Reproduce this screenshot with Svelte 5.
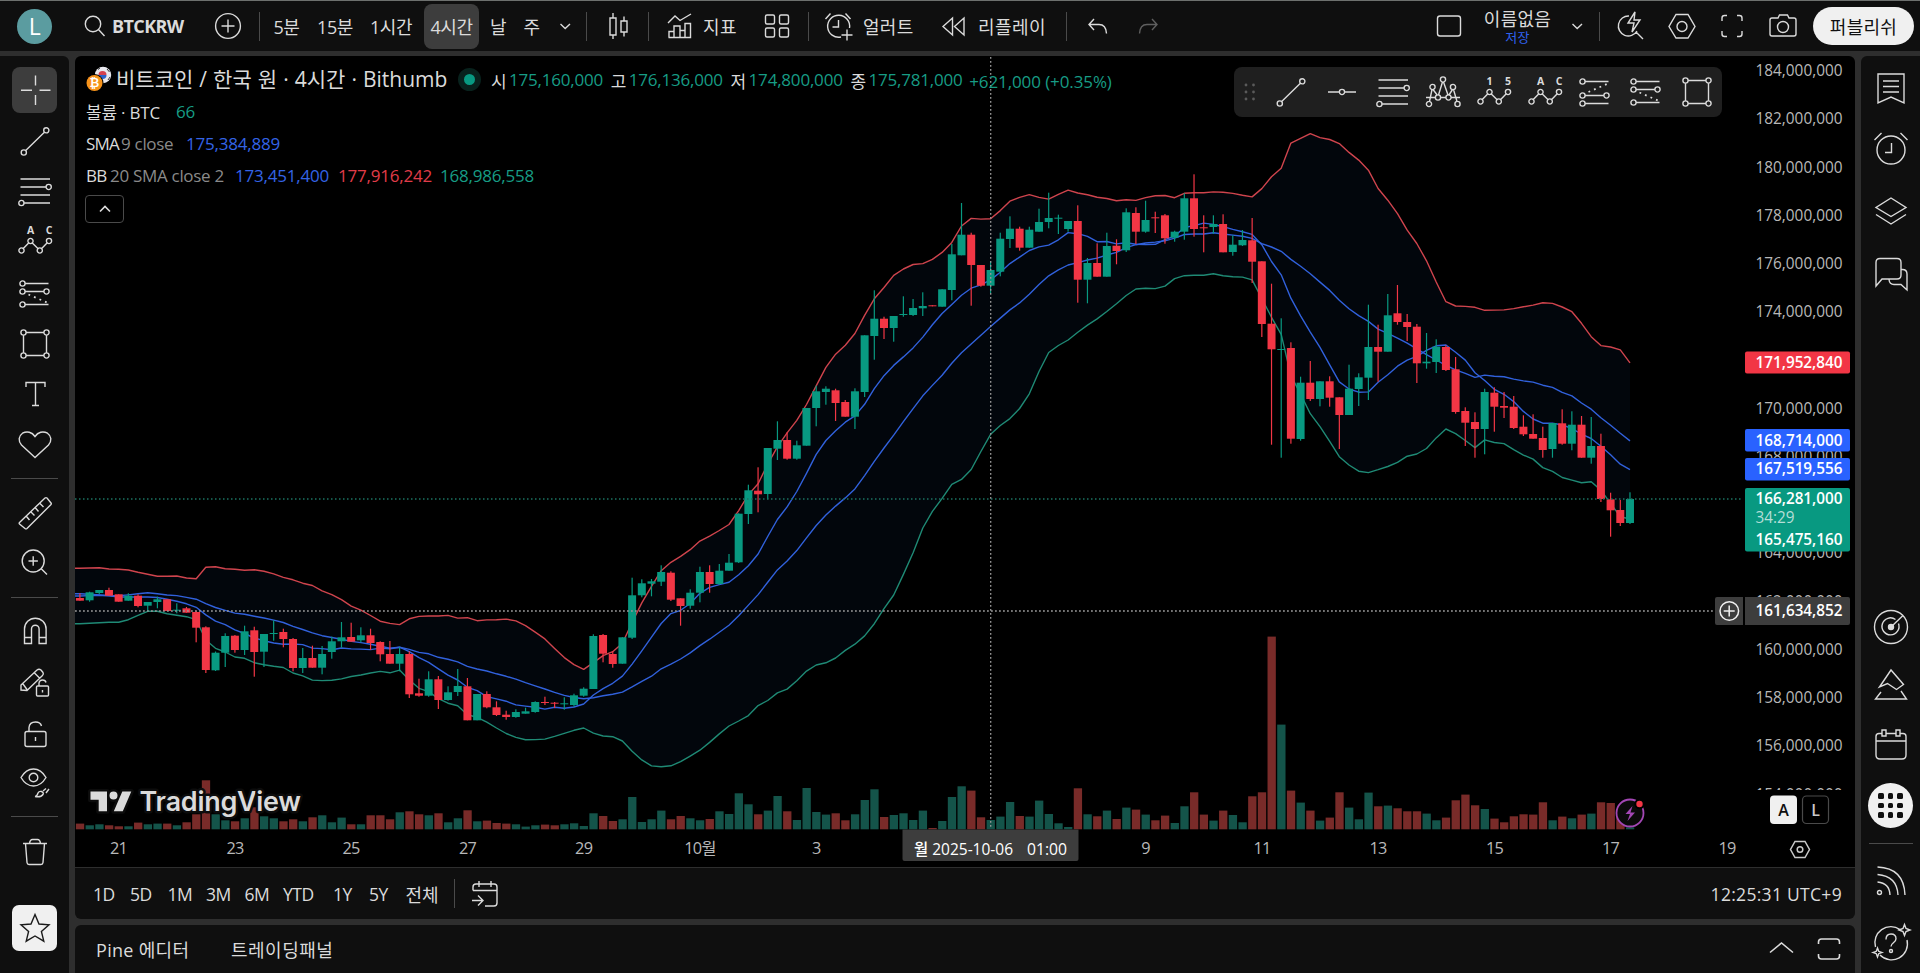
<script>
  const ring = (x, y, r = 2.6) => `M${x - r} ${y}a${r} ${r} 0 1 0 ${2 * r} 0a${r} ${r} 0 1 0 ${-2 * r} 0`;

  // every icon is drawn on a 36 x 36 grid
  const wave = ring(4.5, 27.5) + ring(13.5, 18) + ring(22.8, 27.5) + ring(32, 18) + 'M6.3 25.6L11.6 20M15.3 20l5.6 5.6M24.7 25.6L30 20';
  const icons = {
    search: ring(16, 16, 7.7) + 'M21.7 21.7L27.5 28',
    plus: ring(18, 18, 12.4) + 'M18 11.5v13M11.5 18h13',
    down: 'M13.5 16l4.7 4.5L23 16',
    candles: 'M10 10h6v17h-6zM13 5v5M13 27v4M21 13h6v11h-6zM24 8.5V13M24 24v4.5',
    indicators: 'M6 15l7-7 5 4.500L29 6M7 29.500v-6h5v6M12 29.500V18h6v11.500M18 29.500v-7h5M23 29.500V15.500h5.500v14H6.500',
    grid: 'M8 7h6q1.500 0 1.500 1.500v6q0 1.500-1.500 1.500h-6q-1.500 0-1.500-1.500v-6q0-1.500 1.500-1.500zM22 7h6q1.500 0 1.500 1.500v6q0 1.500-1.500 1.500h-6q-1.500 0-1.500-1.500v-6q0-1.500 1.500-1.500zM8 20h6q1.500 0 1.500 1.500v6q0 1.500-1.500 1.500h-6q-1.500 0-1.500-1.500v-6q0-1.500 1.500-1.500zM22 20h6q1.500 0 1.500 1.500v6q0 1.500-1.500 1.500h-6q-1.500 0-1.500-1.500v-6q0-1.500 1.500-1.500z',
    alert: 'M20 29A11 11 0 1 1 28.500 20M17.500 12v7h-6M4.500 11l5-5.500M24.500 5.500l5 5.500M26 21.500v11M20.500 27h11',
    rewind: 'M16.500 10v17L7 18.500zM28 10v17l-9.500-8.500z',
    undo: 'M14 11l-5 5.500 5 5.500M9 16.500h10q7 0 7.500 9',
    redo: 'M22 11l5 5.500-5 5.500M27 16.500H17q-7 0-7.500 9',
    square: 'M9 8h18q2.500 0 2.500 2.500v15q0 2.500-2.500 2.500H9q-2.500 0-2.500-2.500v-15Q6.500 8 9 8z',
    quick: 'M16 8a10 10 0 1 0 8 15M23 24l7 7M22 4l-7 11h6l-2 9 8-12h-6z',
    settings: 'M12 6.500h12L31 18.500 24 30H12L5 18.500z' + ring(18, 18.500, 5),
    fullscreen: 'M8 13V10q0-2.500 2.500-2.500H13M23 7.500h2.500Q28 7.500 28 10v3M28 23v3q0 2.500-2.500 2.500H23M13 28.500h-2.500Q8 28.500 8 26v-3',
    camera: 'M7 10h6l1.500-3h8L24 10h5q2 0 2 2v14q0 2-2 2H7q-2 0-2-2V12q0-2 2-2z' + ring(18, 19, 5.500),
    cross: 'M18.500 3.500v10M18.500 23v10M4 18.200h11M22.500 18.200h11',
    trend: ring(6.800, 29.500) + ring(29.300, 7.300) + 'M8.700 27.500L27.400 9.200',
    hline: ring(18, 18) + 'M4 18h11.400M20.600 18H32',
    fib: 'M3.500 6h29.500M3.500 14h25.600M3.500 22h29.500M7 30h26' + ring(31.700, 14) + ring(4.400, 30),
    shoulders: ring(4, 30) + ring(7.500, 13) + ring(13, 23.500) + ring(18, 5.500) + ring(23.500, 23.500) + ring(28, 13) + ring(32.500, 30) + 'M4.500 27.500L7 15.500M8 15.500l4.200 5.500M13.500 21l4-13M18.500 8l4.500 13M24 21l3.500-5.500M28.500 15.500l3.500 12M1 23.500h9.400M15.600 23.500h5.300M26 23.500h9',
    wave,
    forecast: ring(5.500, 7.500) + ring(5.500, 15.500) + ring(5.500, 28.500) + ring(29.500, 15.500) + 'M8 7.500h23.500M8 15.500h19M8 28.500h23.500',
    forecastUp: ring(5.500, 7.500) + ring(5.500, 21.500) + ring(5.500, 29.500) + ring(29.500, 21.500) + 'M8 7.500h23.500M8 21.500h19M8 29.500h23.500',
    rect: ring(6.500, 6.500) + ring(29.500, 6.500) + ring(6.500, 29.500) + ring(29.500, 29.500) + 'M9 6.500h18M9 29.500h18M6.500 9v18M29.500 9v18',
    text: 'M9 11V6.500h19V11M18.500 6.500v23M15 29.500h7',
    heart: 'M18 31.500L4.500 19C1 15 1.500 10 5.500 7.200 10 4.800 15 6 18 10.500 21 6 26 4.800 30.500 7.200 34.500 10 35 15 31.500 19z',
    ruler: 'M2.500 27.500L28 3q1-.8 2 0l4 5q.6.8 0 1.500L10 33.500q-1 .8-2 0l-5.500-4.500q-.7-.7 0-1.500zM9.500 21.500l3 3.500M14 17l3.500 3.500M18.500 13l3 3.500M23 8.500l3.500 3.500',
    zoom: ring(16.200, 17, 11) + 'M11.500 17h9.400M16.200 12.300v9.400M24.500 25l5.500 5.500',
    magnet: 'M7.500 29.500V15a10.800 10.800 0 0 1 21.600 0v14.500h-7V15a3.800 3.800 0 0 0-7.600 0v14.500zM7.500 23.500h7M22 23.500h7',
    pencil: 'M4 25v-5L20 5q2-1.500 4 0l2 2.500q1 1.700-.5 3L10 25.500zM6 19l4 5.500M17.500 8l5 5M20.500 21h10q1 0 1 1v8q0 1-1 1h-10q-1 0-1-1v-8q0-1 1-1zM22 21v-3q.5-3 3.500-3t3.500 2.500M25.500 25v2.500',
    lock: 'M10 15.500h17q2 0 2 2v11q0 2-2 2H10q-2 0-2-2v-11q0-2 2-2zM12 15.500v-4q.5-5.500 6.500-5.500 5 0 6 4M18.500 21v4',
    eye: 'M4 12.500Q9 4 16.500 4T29 12.500Q24 21 16.500 21T4 12.500z' + ring(16.500, 12.500, 4.300) + 'M18 31.500q2 0 3-3.500 1-2 3.500-1.500 2.500 1 1.500 3-2 3-8 2zM26 26l3-2.500M29 28l3-4',
    trash: 'M6 9.500h24M8.500 9.500l1.500 19q.2 2 2 2h12q1.800 0 2-2l1.500-19M12.500 9.500q.5-4 3-4h5q2.500 0 3 4',
    star: 'M18 4.500l4 9.500 10 .8-7.600 6.600 2.400 9.800L18 26l-8.800 5.200 2.400-9.800L4 14.800l10-.8z',
    watchlist: 'M5 3h26v29l-13-6-13 6zM10 10h16M10 15.500h16M10 21h16',
    alarm: ring(18, 19, 14) + 'M18.500 12v9.500H12M1.500 9l7-7M27.500 2l7 7',
    layers: 'M18 5l15 9.500-15 9L3 14.500zM3 21.500l15 9.500 15-9.500',
    chats: 'M7 2.500h17q4 0 4 4V19q0 4-4 4H9l-6 7V6.500q0-4 4-4zM28 13.500h1.500q4.500 0 4.500 4.500v16l-6-5.500h-7q-4.500 0-5-5',
    radar: ring(18, 18, 16.500) + 'M25.500 14.500a8.500 8.500 0 1 1-3-4M18 18L30 6.500',
    ideas: 'M6.500 20L18 3l12.500 14.500-7 5-9-6zM8 25L2.500 32h31L28 24',
    calendar: 'M6 6.500h3M13 6.500h10M27 6.500h3q3 0 3 3V28q0 4-4 4H7q-4 0-4-4V9.500q0-3 3-3M3 14h30M9 3h4v6H9zM23 3h4v6h-4z',
    streams: ring(6.500, 29.500, 2) + 'M4.500 19q12 1 12.500 13M4.500 11.500Q24 13 25 32M4.500 4Q31 5 32 32',
    help: 'M27 4.500A16 16 0 0 0 2.500 22M7 30a16 16 0 0 0 27-15M13 14.500q0-5.500 5-5.500t5 4.800c0 4-5 4-5 7.700' + ring(18, 26, 1.500) + 'M31.500-.5l1.500 4 4 1.500-4 1.500-1.500 4-1.500-4-4-1.500 4-1.500zM4.500 23l1.200 3.300 3.300 1.200-3.300 1.200-1.200 3.300-1.200-3.300L0 27.500l3.300-1.200z',
    goto: 'M6 14.500V11q0-3 3-3h18q3 0 3 3v16q0 3-3 3h-9M6 14.500h24M12 5v6M24 5v6M5 24.500h10M11 19.500l5 5-5 5'
  };

  const leftTools = ['cross', 'trend', 'fib', 'wave', 'forecast', 'rect', 'text', 'heart', '-', 'ruler', 'zoom', '-', 'magnet', 'pencil', 'lock', 'eye', '-', 'trash'];
  const favorites = ['trend', 'hline', 'fib', 'shoulders', 'wave15', 'wave', 'forecastUp', 'forecast', 'rect'];
  const ranges = ['1D', '5D', '1M', '3M', '6M', 'YTD', '1Y', '5Y', '전체'];

  // direction, high, body top, body bottom, low, volume (pane pixels)
  const bars = `
r 593.3 598 600.7 600.7 5.7|g 591.7 592.3 600.3 601.7 4|g 590 590 593 594 5|r 587.7 590 595.7 595.7 4|r 594.3 594.3 601.7 601.7 3
g 593.3 595.7 600.7 600.7 3|r 594.3 595.7 606 607.3 6.7|g 602 602 605.7 611 5|g 596.7 599.3 602 608.3 5.7|r 599.3 599.3 611 611 5.7
g 603.3 609.7 610.7 613.3 4|r 607 608.3 612.7 612.7 7|r 610.7 612 627.7 642.3 15|r 626.3 627.3 670 673 49|g 651.5 652.7 670.3 671 15
g 633.3 636 652.7 667 9|r 635 635.7 650 652.7 8|g 625.7 631.3 650 655 11|r 626.7 630.3 652 676.7 22|g 634 634 651.7 667 13
g 620.3 633 634 640.7 11|r 628.7 632 639 647.3 8|r 638 639 668 671.3 10|g 648 658 668 673 8|r 645.7 658 667.7 667.7 12
g 646 654 667.7 674.3 14|g 636.7 641.3 652 658.7 7|g 622 637.3 641.3 647.7 11.7|r 622.7 637 641.7 641.7 5|g 627.3 635.3 640.3 642.3 5
r 628.7 635.3 643 650 14|r 641.3 642 654.3 661.3 14|r 641 654 663.7 663.7 10|g 647.3 654 663.7 671.3 17|r 651.3 654 694.3 698 18
r 678.7 693.3 695.7 696.7 15|g 671.3 679.3 695.7 696.7 14|r 676 679.3 700 709 16|g 686.3 692.3 700 700.7 7|g 669 686 692 696 11
r 678 686.3 720.3 720.3 19|g 694 694 720.3 720.3 8|r 691.3 694 707.3 708.3 8.7|r 701.3 707.3 715 716 6.3|r 710.7 714.7 717 719.7 5.7
g 709.3 712 717 717.7 5|g 707.7 711.3 713.7 713.7 2.7|g 701.3 702 712 712.7 4|r 696.7 702 703 705 4.7|r 702 702.7 703.7 708 4
g 697.3 703.3 704.3 709.7 5|g 693.7 695.3 705 706.7 6|g 687.3 688.7 695.7 696.7 3.3|g 634.3 636 689 689 16|r 634 635 653.7 662.3 13.3
r 651.3 654 664 667.7 8.3|g 637.3 637.3 663.7 663.7 10|g 577.7 595.3 637.7 639 32.3|g 579.3 583.3 595.3 597.3 7.3|g 579 581.3 583.7 596.3 10
g 565.3 572 581.7 586 18.7|r 571.3 572.7 599.7 601 10|r 598.3 598.3 606 625.7 13.3|g 589.3 592.7 605.7 608.7 11|g 566.7 572 592.7 602.3 9
r 565.3 572 584 592.7 10.3|g 564 570.7 584 584.7 18|g 554 562.7 570.7 570.7 15.3|g 513.3 513.7 562.3 563 36|g 484.7 490.3 514 524 25
r 467.3 490.7 494.3 512.3 15|g 448 448 494 499.3 18.7|g 421.3 440 448.7 460 33.3|r 432.3 440 458.7 459.7 18|g 440.7 445.3 458.7 459.7 9.3
g 408 408 445.7 445.7 41.3|g 385.7 391.3 408 426.3 17.3|g 386.3 388.7 392 404.7 14.7|r 388.7 390.3 403 421 16|r 400 402 416.7 416.7 9
g 388.3 391.3 416.7 429 15|g 335.3 335.3 392 397 29.3|g 290.3 318.7 336 359.7 40|r 316.7 318.7 328 339 12.3|g 316 316 328 341.7 14.3
g 296.3 314 315 316.7 16|g 299 308 315 316 9.3|g 292.3 306 308.3 316 18.7|r 305.3 305.3 306.3 306.3 1.3|g 289.3 289.3 306.7 306.7 8.3
g 244 254.3 290 300.3 32.3|g 203 234.7 255.3 255.3 43|r 232.7 234.7 265 305.7 38.7|r 265 265 285.7 286.7 12|g 261.3 270 285.7 293.3 9.3
g 232.7 238.7 271.7 276.3 12.7|g 216.3 228.7 239 248 27.3|r 226.7 228.7 247.7 250.7 13.3|g 226.7 229.7 247.7 247.7 12.7|g 208.7 222 231.7 231.7 28.7
g 192.7 218 222 228.3 15.3|g 214.7 217.7 218.7 234 6|g 221 221 229 231.7 2.3|r 205.3 221 279.7 302.7 41|g 258 263 279.7 303.3 15
r 243.3 263 276.7 276.7 13|g 232.7 246 276.7 276.7 18.7|r 239.3 245.7 251 264.3 10.3|g 208.3 212.3 250.3 252 21.7|r 207.3 213 231.7 244 19.7
g 200.7 220 231.7 232.7 14.7|r 211.7 217.3 218.3 233 9|r 214 215.3 238.3 243.7 13.7|g 230.7 231.7 237.7 241.7 6.3|g 193.3 198.3 231.7 239.7 23
r 174.3 198.3 229 236.7 37|r 215.3 227.3 228.3 252.3 14.7|g 215.3 224 227 233.7 8.7|r 214.3 224 252.3 252.3 18.7|g 235.3 244.7 252 255.7 14.3
g 230 240 245.3 246 7|r 218 240.3 261.7 283 33|r 261.3 261.3 324 337 37|r 283.7 323.7 349.3 444.7 192.7|g 318.3 349 350 457.7 104.7
r 342.3 348 438.7 443.7 38.7|g 376.7 382.7 439 440.7 26.7|r 361 382.7 399 401 18.7|g 381.3 381.3 399 406.3 8.7|r 376.3 381.3 397.7 406.7 11.7
r 397.3 397.3 415 449 37|g 364.7 388.7 415 415 21.7|g 373.3 377.3 389 406 10|g 304.7 347 377.7 400 36.7|r 324.7 347 351.7 381.7 23
g 294 315.3 351.7 351.7 23.7|r 285 313.3 322 324.7 21|r 314 322 327 341 18|r 324 326.7 363.3 383 18|g 333 361.7 363.3 368.7 15.7
g 339.3 346.7 362 373 9|r 345.3 347 370 371 11.7|r 357 369.3 412 413.7 29|r 407.3 411 422.7 446 34.7|r 412.3 422 429 457.7 24
g 388.7 392 429 454.3 20.3|r 387.3 392.7 406.7 431.7 10.7|r 392 406 407.7 418 7|r 396 406.7 428 429 13|r 415.3 426.7 434.3 436 15
r 414.3 434 438.7 438.7 14.7|r 426.7 438 450 457.7 27|g 423 423 449 457.7 9|r 409.3 423.3 443.7 444.7 12.7|g 411.3 424.7 443.7 450.3 11
r 416 424.7 457.7 457.7 14.7|g 417 446 457.7 463.7 15.7|r 433.7 446 499 502 27|r 492.7 499.3 510.3 536.7 26.3|r 500 510 523 526 14|g 492.3 499 523 524 2`
    .trim()
    .split(/[|\n]/)
    .map((row, i) => {
      const [dir, ...n] = row.split(' ');
      const [high, top, bottom, low, vol] = n.map(Number);
      return { dir, high, top, bottom, low, vol, x: 79.9 + 9.688 * i, close: dir === 'g' ? top : bottom };
    });

  // indicator values for the bars that have no full look-back in view
  const upperLead = [568.3, 568, 567.7, 569, 569.3, 570, 572.3, 574.3, 576.3, 576.3, 576, 578, 578.7, 567.3, 566.7, 568.7, 569.3, 570.3, 569.7, 571.3];
  const lowerLead = [623.7, 623.3, 622.7, 622.3, 622.3, 619.7, 615.3, 611.3, 611.3, 613.7, 615.3, 616.7, 619.7, 640, 648.3, 652, 657, 658.3, 662.7, 664.7];
  const smaLead = [593.7, 594.3, 595, 595.7, 597, 597, 597, 597, 597.5];

  const mean = (list) => list.reduce((a, b) => a + b, 0) / list.length;
  const closes = bars.map((b) => b.close);

  const sma = closes.map((_, i) => (i < 9 ? smaLead[i] : mean(closes.slice(i - 8, i + 1))));
  const bands = closes.map((_, i) => {
    if (i < 20) return [upperLead[i], (upperLead[i] + lowerLead[i]) / 2, lowerLead[i]];
    const win = closes.slice(i - 19, i + 1);
    const m = mean(win);
    const sd = Math.sqrt(mean(win.map((v) => (v - m) ** 2)));
    return [m - 2 * sd, m, m + 2 * sd];
  });

  const line = (ys) => [`70,${ys[0]}`, ...ys.map((y, i) => `${bars[i].x.toFixed(1)},${y.toFixed(1)}`)];
  const upper = line(bands.map((b) => b[0]));
  const middle = line(bands.map((b) => b[1]));
  const lower = line(bands.map((b) => b[2]));
  const smaLine = line(sma);
  const cloud = [...upper, ...[...lower].reverse()].join(' ');

  const prices = [184, 182, 180, 178, 176, 174, 170, 168, 164, 162, 160, 158, 156, 154];
  const priceY = (p) => 71 + (184 - p) * 24.11;
  const dates = [['21', 118.5], ['23', 235], ['25', 351], ['27', 467.5], ['29', 583.7], ['10월', 700], ['3', 816.3], ['9', 1145.6], ['11', 1262], ['13', 1378], ['15', 1494.5], ['17', 1610.6], ['19', 1727]];
  const ohlc = [['시', '175,160,000'], ['고', '176,136,000'], ['저', '174,800,000'], ['종', '175,781,000']];
</script>

{#snippet icon(name)}
  <svg class="icon" width="36" height="36" viewBox="0 0 36 36">
    <path d={name === 'wave15' ? icons.wave : icons[name]} />
    {#if name === 'wave' || name === 'wave15'}
      <text x="13.5" y="10.5">{name === 'wave' ? 'A' : '1'}</text>
      <text x="32" y="10.5">{name === 'wave' ? 'C' : '5'}</text>
    {:else if name === 'forecast'}
      <path class="dots" d="M11.500 18.500L31 27" />
    {:else if name === 'forecastUp'}
      <path class="dots" d="M11.500 18L31 9.500" />
    {:else if name === 'radar'}
      <circle class="solid" cx="18" cy="18" r="2.5" />
    {/if}
  </svg>
{/snippet}

{#snippet tag(y, label)}
  <text x="1755.5" {y} textLength="87" lengthAdjust="spacingAndGlyphs">{label}</text>
{/snippet}

<div class="app">
  <header>
    <div class="account"><span>L</span></div>
    <div class="symbol">{@render icon('search')}<b>BTCKRW</b></div>
    <div class="add">{@render icon('plus')}</div>
    <i class="sep s1"></i>
    <div class="m5">5분</div>
    <div class="m15">15분</div>
    <div class="h1">1시간</div>
    <div class="h4">4시간</div>
    <div class="day">날</div>
    <div class="week">주</div>
    <div class="more">{@render icon('down')}</div>
    <i class="sep s2"></i>
    <div class="style">{@render icon('candles')}</div>
    <i class="sep s3"></i>
    <div class="ind">{@render icon('indicators')}지표</div>
    <div class="tpl">{@render icon('grid')}</div>
    <i class="sep s4"></i>
    <div class="alert">{@render icon('alert')}얼러트</div>
    <div class="replay">{@render icon('rewind')}리플레이</div>
    <i class="sep s4"></i>
    <div class="undo">{@render icon('undo')}</div>
    <div class="redo">{@render icon('redo')}</div>
    <div class="layout">{@render icon('square')}</div>
    <div class="name"><span>이름없음</span><small>저장</small></div>
    <div class="arrow">{@render icon('down')}</div>
    <i class="sep s5"></i>
    <div class="quick">{@render icon('quick')}</div>
    <div class="settings">{@render icon('settings')}</div>
    <div class="full">{@render icon('fullscreen')}</div>
    <div class="snap">{@render icon('camera')}</div>
    <button class="publish">퍼블리쉬</button>
  </header>

  <div class="body">
    <aside class="left">
      {#each leftTools as tool}
        {#if tool === '-'}
          <hr />
        {:else}
          <div class="tool {tool}">{@render icon(tool)}</div>
        {/if}
      {/each}
      <div class="tool fav">{@render icon('star')}</div>
    </aside>

    <main>
      <section class="chart">
        <svg class="plot" width="1780" height="810" viewBox="75 57 1780 810">
          <defs>
            <clipPath id="axis"><rect x="1744" y="57" width="110" height="733" /></clipPath>
          </defs>
          {#each bars as b}
            <rect class="vol {b.dir}" x={b.x - 4} y={829.3 - b.vol} width="8.3" height={b.vol} />
          {/each}
          <polygon class="cloud" points={cloud} />
          <polyline class="line blue" points={middle.join(' ')} />
          <polyline class="line blue" points={smaLine.join(' ')} />
          <polyline class="line red" points={upper.join(' ')} />
          <polyline class="line green" points={lower.join(' ')} />
          {#each bars as b}
            <rect class="wick {b.dir}" x={b.x - 0.6} y={b.high} width="1.2" height={b.low - b.high} />
            <rect class="bar {b.dir}" x={b.x - 4} y={b.top} width="8" height={b.bottom - b.top} />
          {/each}

          <path class="last" d="M75 499H1742" />
          <path class="hair" d="M75 611H1714M990.700 57V829" />

          <g class="logo">
            <path d="M90.500 791.500h16.500v19.800h-8.300v-11.500h-8.200zM122.300 791.500h9l-8.500 19.800h-9zM117.500 795.500a4 4 0 1 1-8 0a4 4 0 1 1 8 0z" />
            <text x="139.500" y="811.300" textLength="161.500">TradingView</text>
          </g>

          <g class="flash">
            <circle cx="1630" cy="813" r="13.500" />
            <path d="M1632.500 806l-7 8h4.500l-2.500 7 7.500-8.500h-4.500z" />
            <circle class="badge" cx="1639.500" cy="804" r="4.200" />
          </g>

          <g class="prices" clip-path="url(#axis)">
            {#each prices as p}
              {@render tag(priceY(p) + 5.2, `${p},000,000`)}
            {/each}
          </g>
          <g class="tags">
            <rect class="tred" x="1745" y="351.500" width="105" height="22" rx="2" />
            <rect class="tblue" x="1745" y="429" width="105" height="22.500" rx="2" />
            <rect class="tblue" x="1745" y="458" width="105" height="22.500" rx="2" />
            <rect class="tgreen" x="1745" y="488" width="105" height="63.500" rx="2" />
            <path class="tgrey" d="M1717 597h26v28h-26q-2 0-2-2v-24q0-2 2-2zM1745 597h103q2 0 2 2v24q0 2-2 2h-103z" />
            <path class="addline" d="M1729.200 605.500v11M1723.700 611h11M1720 611a9.300 9.300 0 1 0 18.600 0a9.300 9.300 0 1 0-18.600 0" />
            {@render tag(367.5, '171,952,840')}
            {@render tag(445.5, '168,714,000')}
            {@render tag(474, '167,519,556')}
            {@render tag(504, '166,281,000')}
            <text class="timer" x="1755.500" y="522.800" textLength="39" lengthAdjust="spacingAndGlyphs">34:29</text>
            {@render tag(545.2, '165,475,160')}
            {@render tag(616, '161,634,852')}
          </g>
          <g class="modes">
            <rect class="on" x="1770" y="795.500" width="27" height="28.500" rx="4" />
            <rect x="1802.500" y="796" width="26" height="27.500" rx="4" />
            <text class="dark" x="1783.500" y="815.500">A</text>
            <text x="1815.500" y="815.500">L</text>
          </g>
          <g class="dates">
            {#each dates as [label, x]}
              <text {x} y="854.3">{label}</text>
            {/each}
            <path d="M1795 841.500h10l4.500 8-4.500 8h-10l-4.500-8zM1797.200 849.500a2.800 2.800 0 1 0 5.600 0a2.800 2.800 0 1 0-5.600 0" />
          </g>
          <g class="when">
            <path d="M902.500 829.500h176v29.500q0 2-2 2h-172q-2 0-2-2z" />
            <text x="914" y="854.500" textLength="99" lengthAdjust="spacingAndGlyphs">월 2025-10-06</text>
            <text x="1027" y="854.500" textLength="40" lengthAdjust="spacingAndGlyphs">01:00</text>
          </g>
        </svg>

        <div class="legend">
          <div class="title">
            <svg class="coins" width="27" height="27" viewBox="0 0 27 27">
              <circle cx="17" cy="9" r="8.200" fill="#e8e8ee" />
              <path d="M12.500 9a4 4 0 0 1 8 0z" fill="#d6414e" />
              <path d="M12.500 9a4 4 0 0 0 8 0z" fill="#2c62c9" />
              <path d="M21 3l2.500 3M22 14l2-3M12 3.500l2-1.500" stroke="#333" />
              <circle cx="8.500" cy="17" r="9" fill="#000" />
              <circle cx="8.500" cy="17" r="8" fill="#f7931a" />
              <text x="8.500" y="21.200">₿</text>
            </svg>
            <h1>비트코인 / 한국 원 · 4시간 · Bithumb</h1>
            <span class="live"></span>
            {#each ohlc as [k, v]}
              <span class="k">{k}</span><span class="v">{v}</span>
            {/each}
            <span class="chg">+621,000 (+0.35%)</span>
          </div>
          <div class="row"><span class="w90">볼륨 · BTC</span><span class="up">66</span></div>
          <div class="row"><b class="w35">SMA</b><span class="dim w65">9 close</span><span class="mid">175,384,889</span></div>
          <div class="row"><b class="w24">BB</b><span class="dim w125">20 SMA close 2</span><span class="mid w103">173,451,400</span><span class="down w102">177,916,242</span><span class="up">168,986,558</span></div>
          <div class="fold"><svg width="12" height="8" viewBox="0 0 12 8"><path d="M1 6.500l5-5 5 5" /></svg></div>
        </div>

        <div class="favbar">
          <svg class="grip" width="12" height="18" viewBox="0 0 12 18">
            <circle cx="2" cy="2" r="1.400" /><circle cx="9.500" cy="2" r="1.400" />
            <circle cx="2" cy="9" r="1.400" /><circle cx="9.500" cy="9" r="1.400" />
            <circle cx="2" cy="16" r="1.400" /><circle cx="9.500" cy="16" r="1.400" />
          </svg>
          {#each favorites as f}
            <div>{@render icon(f)}</div>
          {/each}
        </div>
      </section>

      <section class="ranges">
        {#each ranges as r}
          <span class="range">{r}</span>
        {/each}
        <i class="sep"></i>
        {@render icon('goto')}
        <time>12:25:31 UTC+9</time>
      </section>

      <footer>
        <span class="pine">Pine 에디터</span>
        <span>트레이딩패널</span>
        <svg width="74" height="24" viewBox="0 0 74 24">
          <path d="M2 15.500L13.500 6 25 15.500M50.500 7V5q0-3 3-3h15q3 0 3 3v2M50.500 17v2q0 3 3 3h15q3 0 3-3v-2" />
        </svg>
      </footer>
    </main>

    <aside class="right">
      <div class="watch">{@render icon('watchlist')}</div>
      <div class="alarm">{@render icon('alarm')}</div>
      <div class="layers">{@render icon('layers')}</div>
      <div class="chats">{@render icon('chats')}</div>
      <div class="radar">{@render icon('radar')}</div>
      <div class="ideas">{@render icon('ideas')}</div>
      <div class="cal">{@render icon('calendar')}</div>
      <div class="apps">
        <span>{#each Array(9) as _}<i></i>{/each}</span>
      </div>
      <hr />
      <div class="streams">{@render icon('streams')}</div>
      <div class="help">{@render icon('help')}</div>
    </aside>
  </div>
</div>

<style>
  :global(body) {
    margin: 0;
    background: #2e2e2e;
    overflow: hidden;
  }

  .app {
    width: 1920px;
    height: 973px;
    display: flex;
    flex-direction: column;
    gap: 5px;
    background: #2e2e2e;
    color: #dbdbdb;
    font-family: "Open Sans", "Noto Sans CJK KR", sans-serif;
    font-size: 18px;
  }

  svg {
    display: block;
    flex: none;
  }

  .icon {
    fill: none;
    stroke: currentColor;
    stroke-width: 1.4;
    overflow: visible;
  }

  .icon text {
    fill: currentColor;
    stroke: none;
    font-size: 10.5px;
    font-weight: 700;
    text-anchor: middle;
  }

  .icon .dots {
    stroke-width: 1.8;
    stroke-dasharray: 1.8 4.2;
  }

  .icon .solid {
    fill: currentColor;
  }

  header {
    height: 51px;
    box-sizing: border-box;
    border-top: 1px solid #6d706e;
    background: #0f0f0f;
    display: flex;
    align-items: center;
    flex: none;
  }

  header > div {
    height: 45px;
    box-sizing: border-box;
    display: flex;
    align-items: center;
    justify-content: center;
    flex: none;
    letter-spacing: -0.4px;
    white-space: nowrap;
  }

  .account { width: 69px; }

  .account span {
    width: 35px;
    height: 35px;
    border-radius: 50%;
    background: #5b9ca0;
    color: #fff;
    font-size: 23px;
    font-weight: 500;
    line-height: 35px;
    text-align: center;
  }

  header .symbol { width: 133px; justify-content: flex-start; padding-left: 8px; }
  .symbol b { font-weight: 700; font-size: 18px; letter-spacing: -0.6px; margin-left: -1px; }
  .add { width: 51px; }

  .sep {
    flex: none;
    height: 29px;
    width: 1px;
    background: #4a4a4a;
  }

  .s1 { margin: 0 6px; }
  .s2 { margin: 0 2px 0 3px; }
  .s3 { margin: 0 1px; }
  .s4 { margin: 0 5px 0 6px; }
  .s5 { margin: 0 7px; }
  .m5 { width: 41px; }
  .m15 { width: 56px; }
  .h1 { width: 56px; }
  .h4 { width: 55px; margin-left: 5px; background: #3d3d3d; border-radius: 8px; }
  .day { width: 38px; }
  .week { width: 29px; }
  .more { width: 37px; }
  .style { width: 58px; }
  header .ind { width: 102px; justify-content: flex-start; padding-left: 12px; gap: 5px; letter-spacing: 0.5px; }
  .tpl { width: 50px; }
  header .alert { width: 115px; justify-content: flex-start; padding-left: 7px; gap: 6px; letter-spacing: 0.3px; }
  header .replay { width: 131px; justify-content: flex-start; padding-left: 7px; gap: 6px; letter-spacing: 0.4px; }
  .undo { width: 51px; }
  .redo { width: 50px; color: #5f5f5f; }
  header .layout { width: 48px; margin-left: auto; }
  header .name { width: 89px; flex-direction: column; letter-spacing: 0.3px; }
  .name span { line-height: 22px; }
  .name small { font-size: 13px; line-height: 15px; color: #2f62f0; }
  .arrow { width: 30px; }
  .quick { width: 48px; }
  .settings { width: 54px; }
  .full { width: 46px; }
  .snap { width: 55px; }

  .publish {
    flex: none;
    width: 101px;
    height: 38px;
    margin: 0 6px 0 3px;
    padding: 0;
    border: 0;
    border-radius: 19px;
    background: #f0f0f0;
    color: #111;
    font: 400 18px "Noto Sans CJK KR", sans-serif;
    letter-spacing: 0.3px;
    white-space: nowrap;
  }

  .body {
    flex: 1;
    min-height: 0;
    display: flex;
    gap: 6px;
  }

  aside {
    background: #0f0f0f;
    display: flex;
    flex-direction: column;
    align-items: center;
    box-sizing: border-box;
    flex: none;
  }

  .left {
    width: 69px;
    padding-top: 11px;
    border-radius: 0 6px 0 0;
  }

  .tool {
    width: 45px;
    height: 50px;
    display: flex;
    align-items: center;
    justify-content: center;
    flex: none;
  }

  .tool.cross {
    height: 46px;
    margin-bottom: 3px;
    background: #3d3d3d;
    border-radius: 8px;
  }

  .tool.wave { margin-bottom: 2px; }
  .tool.forecast { height: 51px; }
  .tool.ruler, .tool.lock { height: 49px; }
  .tool.magnet { height: 48px; }
  .tool.pencil { height: 53px; }
  .tool.eye { height: 50px; }
  .tool.trash { height: 53px; }

  .tool.fav {
    height: 46px;
    margin-top: 27px;
    background: #f0f0f0;
    border-radius: 7px;
    color: #1a1a1a;
  }

  hr {
    width: 47px;
    height: 1px;
    margin: 9px 0;
    border: 0;
    background: #4a4a4a;
    flex: none;
  }

  .left hr:nth-of-type(2) { margin: 10px 0; }
  .left hr:nth-of-type(3) { margin: 8px 0; }

  .right {
    width: 59px;
    border-radius: 6px 0 0 0;
  }

  .right > div {
    height: 36px;
    flex: none;
  }

  .watch { margin-top: 15px; }
  .alarm { margin-top: 24px; }
  .layers { margin-top: 26px; }
  .chats { margin-top: 27px; }
  .radar { margin-top: 317px; }
  .ideas { margin-top: 22px; }
  .cal { margin-top: 24px; }

  .right > .apps {
    width: 45px;
    height: 45px;
    margin-top: 20px;
    border-radius: 50%;
    background: #f0f0f0;
    display: flex;
    align-items: center;
    justify-content: center;
  }

  .apps span {
    display: grid;
    grid-template-columns: repeat(3, 5.500px);
    gap: 4px;
  }

  .apps i {
    height: 5.500px;
    border-radius: 1.500px;
    background: #0f0f0f;
  }

  .right hr { width: 44px; margin: 15px 0 19px; }
  .help { margin-top: 26px; }

  main {
    flex: 1;
    min-width: 0;
    display: flex;
    flex-direction: column;
  }

  .chart {
    position: relative;
    height: 811px;
    background: #000;
    border-radius: 6px 6px 0 0;
    overflow: hidden;
  }

  .plot { margin-top: 1px; }

  .vol.r { fill: #792b29; }
  .vol.g { fill: #14544a; }
  .cloud { fill: #02060c; }
  .line { fill: none; stroke-width: 1.400; stroke-linejoin: round; }
  .line.blue { stroke: #3161dc; }
  .line.red { stroke: #cf444d; }
  .line.green { stroke: #1f8a75; }
  .bar.r, .wick.r { fill: #f23645; }
  .bar.g, .wick.g { fill: #089981; }
  .last { stroke: #1b7362; stroke-width: 1.300; stroke-dasharray: 1.500 2.500; }
  .hair { fill: none; stroke: #999; stroke-width: 1.300; stroke-dasharray: 1.800 2.200; }

  .logo {
    fill: #dbdbdb;
    stroke: #0c0c0c;
    stroke-width: 5;
    paint-order: stroke;
    stroke-linejoin: round;
    font: 600 27px Inter, sans-serif;
  }

  .flash circle { fill: #0a0a0a; stroke: #a347b5; stroke-width: 1.800; }
  .flash path { fill: #a347b5; }
  .flash .badge { fill: #f23645; stroke: #000; stroke-width: 2; }

  .prices, .dates, .tags, .when { font-size: 16.300px; fill: #b8b8b8; }
  .tags text { font-weight: 600; fill: #fff; }
  .when text { font-weight: 500; fill: #fff; }
  .tags .timer { font-weight: 400; fill: #b5ded7; }
  .tred { fill: #f23645; }
  .tblue { fill: #2962ff; }
  .tgreen { fill: #089981; }
  .tgrey, .when path { fill: #3d3d3d; }
  .addline { fill: none; stroke: #f0f0f0; stroke-width: 1.500; }
  .modes rect { fill: none; stroke: #4a4a4a; stroke-width: 1.200; }
  .modes .on { fill: #f0f0f0; stroke: none; }
  .modes text { font-size: 16px; font-weight: 600; text-anchor: middle; fill: #c8c8c8; }
  .modes .dark { fill: #0f0f0f; }
  .dates text { text-anchor: middle; letter-spacing: -0.7px; }
  .dates path { fill: none; stroke: #c8c8c8; stroke-width: 1.500; }

  .legend {
    position: absolute;
    left: 11px;
    top: 7px;
    font-size: 17px;
  }

  .title {
    height: 32px;
    display: flex;
    align-items: center;
    white-space: nowrap;
  }

  .coins text {
    fill: #fff;
    font: 700 12px "DejaVu Sans", sans-serif;
    text-anchor: middle;
  }

  h1 {
    width: 337px;
    margin: 0 0 0 3px;
    font-size: 21px;
    font-weight: 400;
    line-height: 32px;
    word-spacing: 0.6px;
  }

  .live {
    width: 11px;
    height: 11px;
    margin: 0 10px 0 5px;
    border: 6.500px solid #08221d;
    border-radius: 50%;
    background: #089981;
  }

  .k { width: 18px; margin-top: 2px; color: #dbdbdb; }
  .v { width: 101.800px; color: #179c85; letter-spacing: -0.2px; }
  .chg { color: #179c85; margin: 4px 0 0 -1px; letter-spacing: -0.100px; }

  .row {
    height: 32px;
    display: flex;
    align-items: center;
    white-space: nowrap;
  }

  .row b { font-weight: 500; }
  .row > * { flex: none; letter-spacing: -0.200px; }
  .row > b { letter-spacing: -0.800px; }
  .w24 { width: 24px; }
  .w35 { width: 35px; }
  .w65 { width: 65px; }
  .w90 { width: 90px; }
  .w102 { width: 102px; }
  .w103 { width: 103px; }
  .w125 { width: 125px; }
  .row .dim { color: #8a8a8a; letter-spacing: -0.300px; }
  .mid { color: #3464e6; }
  .down { color: #e03c49; }
  .up { color: #179c85; }

  .fold {
    width: 37px;
    height: 26px;
    margin: 4px 0 0 -1px;
    border: 1px solid #4a4a4a;
    border-radius: 4px;
    display: flex;
    align-items: center;
    justify-content: center;
  }

  .fold path, footer path {
    fill: none;
    stroke: #dbdbdb;
    stroke-width: 1.600;
  }

  .favbar {
    position: absolute;
    left: 1159px;
    top: 11px;
    width: 488px;
    height: 50px;
    box-sizing: border-box;
    padding-left: 10px;
    display: flex;
    align-items: center;
    border-radius: 8px;
    background: #1f1f1f;
  }

  .favbar div {
    width: 50.700px;
    display: flex;
    justify-content: center;
  }

  .grip { fill: #5a5a5a; margin-right: 10px; }

  .ranges {
    height: 51px;
    border-top: 1px solid #2e2e2e;
    background: #0f0f0f;
    border-radius: 0 0 6px 6px;
    display: flex;
    align-items: center;
    padding: 0 13px 0 18px;
    font-size: 17.500px;
  }

  .range {
    flex: none;
    width: 38.500px;
    letter-spacing: -0.500px;
    white-space: nowrap;
  }

  .range:nth-child(1) { width: 37px; }
  .range:nth-child(2) { width: 37.500px; }
  .range:nth-child(6) { width: 50px; }
  .range:nth-child(7) { width: 36px; }
  .range:nth-child(8) { width: 36.500px; }
  .range:nth-child(9) { width: 48.500px; font-size: 18px; letter-spacing: 0; }
  .ranges .icon { margin-left: 12px; }
  time { margin-left: auto; white-space: nowrap; letter-spacing: 0.300px; }

  footer {
    flex: 1;
    margin-top: 6px;
    padding: 0 13px 0 21px;
    background: #0f0f0f;
    border-radius: 6px 6px 0 0;
    display: flex;
    align-items: center;
    font-size: 18px;
    letter-spacing: 0.500px;
    white-space: nowrap;
  }

  .pine { width: 135px; letter-spacing: 0.300px; }
  footer svg { margin-left: auto; }
</style>
